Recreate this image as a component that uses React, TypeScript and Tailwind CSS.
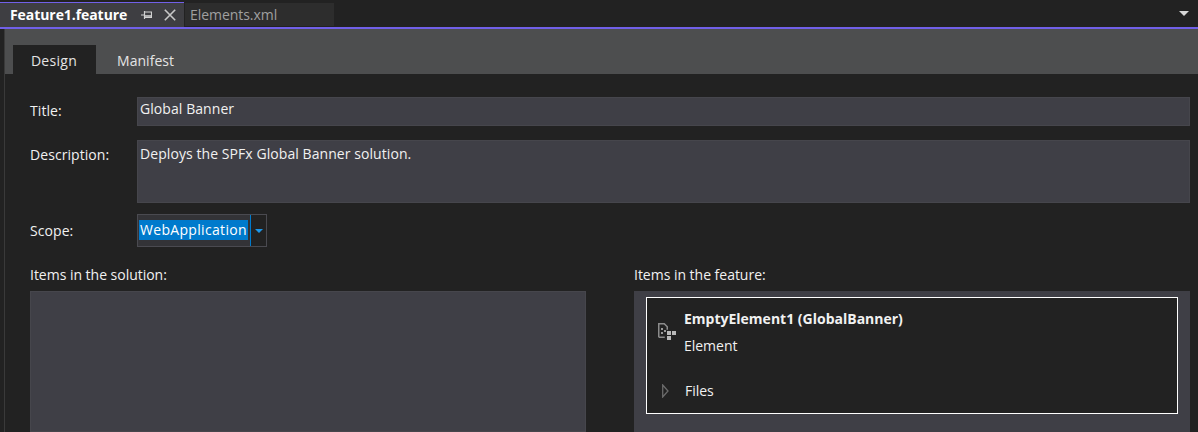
const FONT = "font-['Open_Sans','Noto_Sans',sans-serif]";

function PinIcon() {
  return (
    <svg width="11" height="10" viewBox="0 0 11 10" className="block">
      <path d="M0 5h3.5M3.5 1v8" stroke="#d0d0d0" strokeWidth="1.2" fill="none" />
      <path d="M4 2h6.5v5.5H4" stroke="#d0d0d0" strokeWidth="1.2" fill="none" />
      <path d="M4 6h6" stroke="#d0d0d0" strokeWidth="1.6" fill="none" />
    </svg>
  );
}

function CloseIcon() {
  return (
    <svg width="12" height="12" viewBox="0 0 12 12" className="block">
      <path d="M.8.8l10.4 10.4M11.2.8L.8 11.2" stroke="#c8c8c8" strokeWidth="1.6" fill="none" />
    </svg>
  );
}

function ElementIcon() {
  return (
    <svg width="19" height="18" viewBox="0 0 19 18" className="block">
      <path d="M.75 14.25V.75h5.5l3 3v3M.75 14.25h6" stroke="#8c8c8c" strokeWidth="1.5" fill="none" />
      <path d="M3 5h2v2H3zM3 9h2v2H3zM6 7h2v2H6z" fill="#9a9a9a" />
      <path d="M9 8h4v4H9zM14 8h4v4h-4zM9 13h4v4H9z" fill="#b8b8b8" />
    </svg>
  );
}

function Field({ label, children, top = "pt-[6px]" }: { label: string; children: React.ReactNode; top?: string }) {
  return (
    <div className="flex items-start">
      <div className={`w-[107px] shrink-0 text-[14px] text-[#f1f1f1] ${top}`}>{label}</div>
      {children}
    </div>
  );
}

export default function App() {
  return (
    <div className={`${FONT} h-[432px] w-[1198px] overflow-hidden bg-[#222222] text-[14px] leading-[20px]`}>
      {/* document well tabs */}
      <div className="flex h-[27px] items-end">
        <div className="flex h-[25px] w-[184px] items-center border-t border-[#7160e8] bg-[#3e3e42] pl-[10px]">
          <span className="w-[131px] text-[14px] font-bold tracking-[-0.07px] text-white">Feature1.feature</span>
          <PinIcon />
          <span className="ml-[12px]"><CloseIcon /></span>
        </div>
        <div className="mb-px ml-px flex h-[23px] w-[149px] items-center bg-[#2d2d2d] pl-[5px] text-[14px] tracking-[-0.05px] text-[#a0a0a0]">
          Elements.xml
        </div>
        <div className="flex h-full flex-1 items-center justify-end pr-[9px]">
          <div className="h-0 w-0 border-x-[5px] border-t-[5px] border-x-transparent border-t-[#d8d8d8]" />
        </div>
      </div>
      <div className="h-[2px] bg-[#7160e8]" />

      <div className="ml-[4px] h-[403px] border-l border-[#3a3a3a]">
        {/* designer tabs */}
        <div className="flex h-[45px] items-end bg-[#4d4e4f] pl-[8px]">
          <div className="flex h-[29px] w-[83px] items-center justify-center bg-[#222222] pt-[2px] pr-[1px] text-[14px] tracking-[0.3px] text-[#e4e4e4]">Design</div>
          <div className="flex h-[29px] items-center pl-[21px] pt-[2px] text-[14px] tracking-[0.05px] text-[#e4e4e4]">Manifest</div>
        </div>

        <div className="flex flex-col pl-[25px] pr-[8px] pt-[23px] tracking-[0.07px]">
          <Field label="Title:" top="pt-[4px]">
            <div className="h-[29px] flex-1 border border-[#46464c] bg-[#3f3f46] pl-[2px] text-[14px] leading-[22px] text-[#f1f1f1]">Global Banner</div>
          </Field>
          <div className="mt-[14px]">
            <Field label="Description:" top="pt-[5px]">
              <div className="h-[63px] flex-1 border border-[#46464c] bg-[#3f3f46] pl-[2px] text-[14px] leading-[26px] text-[#f1f1f1]">Deploys the SPFx Global Banner solution.</div>
            </Field>
          </div>
          <div className="mt-[11px]">
            <Field label="Scope:" top="pt-[7px]">
              <div className="flex h-[33px] w-[130px] border border-[#4a4a50] bg-[#333337]">
                <div className="flex flex-1 items-start pl-[1px] pt-[5px]">
                  <span className="flex h-[20px] w-[109px] items-center bg-[#007acc] pl-[1px] text-[14px] tracking-[0.32px] text-white">WebApplication</span>
                </div>
                <div className="flex w-[16px] items-center justify-center border-l-[1px] border-[#007acc] bg-[#222222]">
                  <div className="h-0 w-0 border-x-[4px] border-t-[4px] border-x-transparent border-t-[#1c97ea]" />
                </div>
              </div>
            </Field>
          </div>

          <div className="mt-[18px] flex gap-[48px] tracking-[-0.02px]">
            <div className="w-[556px]">
              <div className="h-[26px] text-[14px] text-[#f1f1f1]">Items in the solution:</div>
              <div className="h-[141px] border border-[#46464c] bg-[#3f3f46]" />
            </div>
            <div className="w-[556px]">
              <div className="h-[26px] text-[14px] text-[#f1f1f1]">Items in the feature:</div>
              <div className="h-[141px] bg-[#3f3f46] px-[12px] pt-[6px]">
                <div className="flex h-[117px] flex-col border border-white bg-[#222222]">
                  <div className="flex pl-[11px] pt-[10px]">
                    <span className="mt-[15px] mr-[7px]"><ElementIcon /></span>
                    <div>
                      <div className="text-[14px] font-bold leading-[22px] tracking-normal text-[#f1f1f1]">EmptyElement1 (GlobalBanner)</div>
                      <div className="mt-[6px] text-[14px] leading-[20px] text-[#f1f1f1]">Element</div>
                    </div>
                  </div>
                  <div className="mt-[25px] flex items-center pl-[15px]">
                    <svg width="7" height="14" viewBox="0 0 7 14" className="mr-[16px] block">
                      <path d="M.7 1l5.3 6-5.3 6z" stroke="#6b6b6b" strokeWidth="1.3" fill="none" />
                    </svg>
                    <span className="text-[14px] text-[#f1f1f1]">Files</span>
                  </div>
                </div>
              </div>
            </div>
          </div>
        </div>
      </div>
    </div>
  );
}
